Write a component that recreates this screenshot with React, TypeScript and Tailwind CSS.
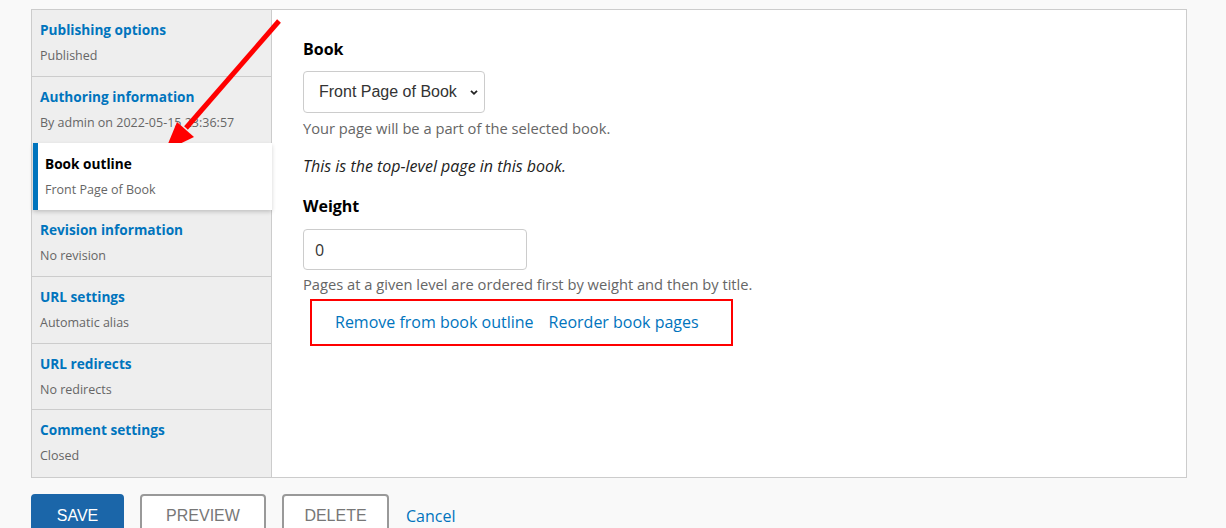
import React from "react";

const tabs = [
  { title: "Publishing options", sub: "Published" },
  { title: "Authoring information", sub: "By admin on 2022-05-15 23:36:57" },
  { title: "Book outline", sub: "Front Page of Book", active: true },
  { title: "Revision information", sub: "No revision" },
  { title: "URL settings", sub: "Automatic alias" },
  { title: "URL redirects", sub: "No redirects" },
  { title: "Comment settings", sub: "Closed" },
];

export default function App() {
  return (
    <div
      className="relative w-[1226px] h-[528px] overflow-hidden bg-[#f9f9f9]"
      style={{ fontFamily: '"Open Sans", "Liberation Sans", sans-serif' }}
    >
      <div className="pt-[9px] pl-[31px]">
        <div className="flex w-[1156px] h-[469px] border border-[#ccc] bg-white">
          <div className="w-[240px] shrink-0 bg-[#eeeeee] border-r border-[#ccc] flex flex-col">
            {tabs.map((t, i) =>
              t.active ? (
                <div
                  key={i}
                  className="relative h-[67px] ml-[1px] -mr-[1px] bg-white border-l-[5px] border-[#0074bd] pl-[7px] pt-[11px] shadow-[0_2px_4px_rgba(0,0,0,0.18)] z-10"
                >
                  <div className="text-[13.65px] font-bold text-black leading-[20px]">{t.title}</div>
                  <div className="text-[12.5px] text-[#666] leading-[20px] mt-[6px]">{t.sub}</div>
                </div>
              ) : (
                <div
                  key={i}
                  className={`h-[67px] pl-[8px] pt-[10px] ${i < tabs.length - 1 && !tabs[i + 1]?.active ? "border-b border-[#ccc]" : ""}`}
                >
                  <div className="text-[13.65px] font-bold text-[#0074bd] leading-[20px]">{t.title}</div>
                  <div className="text-[12.5px] text-[#666] leading-[20px] mt-[6px]">{t.sub}</div>
                </div>
              )
            )}
          </div>
          <div className="flex-1 pl-[31px] pt-[27px]">
            <div className="text-[16px] font-bold text-black leading-[24px]">Book</div>
            <div className="mt-[10px] flex items-center w-[182px] h-[42px] border border-[#ccc] rounded-[4px] pl-[15px] pr-[5px] justify-between">
              <span
                className="text-[16px] text-[#333]"
                style={{ fontFamily: '"Liberation Sans", Arial, sans-serif' }}
              >
                Front Page of Book
              </span>
              <svg width="10" height="7" viewBox="0 0 10 7">
                <path d="M2 1.8 L5 4.8 L8 1.8" stroke="#222" strokeWidth="1.8" fill="none" />
              </svg>
            </div>
            <div className="mt-[4px] text-[14.7px] text-[#666] leading-[22px]">
              Your page will be a part of the selected book.
            </div>
            <div className="mt-[16px] text-[16px] italic text-[#222] leading-[22px]">
              This is the top-level page in this book.
            </div>
            <div className="mt-[17px] text-[16px] font-bold text-black leading-[24px]">Weight</div>
            <div className="mt-[11px] flex items-center w-[224px] h-[41px] border-[1.5px] border-[#ccc] rounded-[4px] pl-[11px]">
              <span className="text-[16px] text-[#333]">0</span>
            </div>
            <div className="mt-[3px] text-[14.7px] text-[#666] leading-[22px]">
              Pages at a given level are ordered first by weight and then by title.
            </div>
            <div className="mt-[4px] ml-[7px] w-[423px] h-[47px] border-2 border-[#ff0000] flex items-center pl-[23px] pb-[2px] gap-[15px]">
              <span className="text-[16px] text-[#0074bd]">Remove from book outline</span>
              <span className="text-[16px] text-[#0074bd]">Reorder book pages</span>
            </div>
          </div>
        </div>
        <div
          className="mt-[16px] flex items-start gap-[16px]"
          style={{ fontFamily: '"Liberation Sans", Arial, sans-serif' }}
        >
          <div className="w-[93px] h-[44px] bg-[#1b66a9] rounded-[4px] border-2 border-[#1b66a9] text-white text-[16px] flex items-center justify-center">
            SAVE
          </div>
          <div className="w-[126px] h-[44px] bg-white rounded-[4px] border-2 border-[#999] text-[#777] text-[16px] flex items-center justify-center">
            PREVIEW
          </div>
          <div className="w-[107px] h-[44px] bg-white rounded-[4px] border-2 border-[#999] text-[#777] text-[16px] flex items-center justify-center">
            DELETE
          </div>
          <div
            className="h-[44px] flex items-center text-[16px] text-[#0074bd] pl-[1px]"
            style={{ fontFamily: '"Open Sans", sans-serif' }}
          >
            Cancel
          </div>
        </div>
      </div>
      <svg className="absolute left-0 top-0 pointer-events-none" width="1226" height="528">
        <line x1="279" y1="21" x2="186" y2="128" stroke="#ff0000" strokeWidth="5" strokeLinecap="butt" />
        <polygon points="165,151 177,122 194,137" fill="#ff0000" />
      </svg>
    </div>
  );
}
